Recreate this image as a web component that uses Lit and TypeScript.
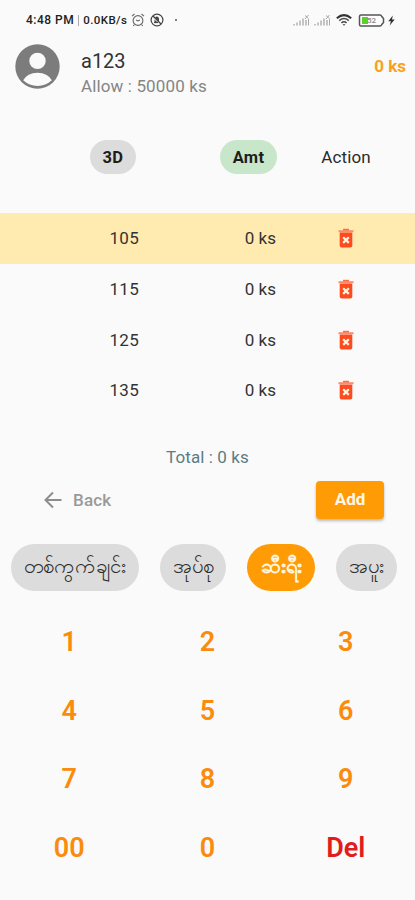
import { LitElement, html, css, svg } from "lit";
import { customElement, state } from "lit/decorators.js";
import { classMap } from "lit/directives/class-map.js";

const trash = svg`<svg class="trash" viewBox="0 0 16 20" width="16" height="20">
  <path d="M5 .8h6v2H5z" fill="#ff6a45"/>
  <path d="M.5 2.200h15v2H.5z" fill="#ff8a6c"/>
  <path d="M1.700 4.600h12.600v12.900a2 2 0 0 1-2 2H3.700a2 2 0 0 1-2-2z" fill="#fb4c20"/>
  <path d="M5.200 9.300l5.600 5.600M10.800 9.300l-5.600 5.600" stroke="#fff3e0" stroke-width="2.200" fill="none"/>
</svg>`;

const signal = svg`<svg viewBox="0 0 17 12" width="17" height="12">
  <path d="M1 11.500V10M4 11.500V8.500M7 11.500V6.500M10 11.500V4.500M13 11.500V6" stroke="#c4c4c4" stroke-width="2"/>
  <path d="M12 1.500l3.500 3M15.500 1l-3.500 4M15.500 5v6.500" stroke="#aaa" stroke-width="1"/>
</svg>`;

@customElement("status-bar")
class StatusBar extends LitElement {
  static styles = css`
    :host { display: flex; height: 39px; box-sizing: border-box; padding: 1px 20px 0 26px; align-items: center; justify-content: space-between; color: #222; font: 500 12px Roboto, sans-serif; }
    .side { display: flex; align-items: center; }
    .time { font-size: 12px; letter-spacing: .5px; }
    .bar { width: 1px; height: 11px; background: #aaa; margin: 0 4px 0 4px; }
    .speed { font-size: 11.500px; letter-spacing: .4px; }
    .alarm { margin-left: 4px; }
    .mute { margin-left: 5px; }
    .dot { width: 2px; height: 2px; border-radius: 1px; background: #555; margin-left: 11px; }
    .second { margin-left: 4px; display: flex; }
    .first { display: flex; }
    .wifi { margin-left: 5px; }
    .battery { margin-left: 6px; }
    .bolt { margin-left: 3px; }
    .level { font: 500 8px Roboto, sans-serif; }
  `;
  render() {
    return html`
      <div class="side">
        <span class="time">4:48 PM</span><span class="bar"></span><span class="speed">0.0KB/s</span>
        <svg class="alarm" viewBox="0 0 14 14" width="14" height="14" fill="none" stroke="#666" stroke-width="1.100">
          <circle cx="7" cy="7.500" r="4.900"/><path d="M1 3.200L3.500 1M13 3.200L10.500 1M3.500 11.500L2.300 13M10.500 11.500l1.200 1.500M5 7l2 1 2-1"/>
        </svg>
        <svg class="mute" viewBox="0 0 14 14" width="14" height="14" fill="none" stroke="#444" stroke-width="1.200">
          <circle cx="7" cy="7" r="5.900"/><path d="M3 3l8 8"/><path d="M5 4.500c2-2 4-.5 4 1.500v2.500L5.500 5zM4.500 6.500v3h3" fill="#444" stroke="none"/><path d="M4 9.500h4"/>
        </svg>
        <i class="dot"></i>
      </div>
      <div class="side">
        <span class="first">${signal}</span><span class="second">${signal}</span>
        <svg class="wifi" viewBox="0 0 16 12" width="16" height="12" fill="none">
          <path d="M.8 4.200Q8-2 15.200 4.200" stroke="#333" stroke-width="2"/>
          <path d="M3.200 6.600Q8 2.500 12.800 6.600" stroke="#555" stroke-width="1.500"/>
          <path d="M5.400 8.900Q8 6.700 10.600 8.900" stroke="#444" stroke-width="1.400"/><path d="M6.600 10.300L8 11.800l1.400-1.500z" fill="#333"/>
        </svg>
        <svg class="battery" viewBox="0 0 27 13" width="27" height="13">
          <path d="M3 1h19q1.200 0 1.800 1.500l1.700 2v4l-1.700 2Q23.200 12 22 12H3Q1.500 12 1.500 10.500v-8Q1.500 1 3 1z" fill="#fff" stroke="#555" stroke-width="1.500"/>
          <path d="M4 3h6v7H4z" fill="#5fd02b"/>
          <text class="level" x="9" y="9.400" fill="#888">52</text>
        </svg>
        <svg class="bolt" viewBox="0 0 7 11" width="7" height="11"><path d="M4.800.5L.3 6.200h2.600L1.700 10.500 6.700 4.500H4z" fill="#333"/></svg>
      </div>`;
  }
}

@customElement("app-root")
class AppRoot extends LitElement {
  @state() private selected = 0;
  @state() private mode = 2;

  private numbers = ["105", "115", "125", "135"];
  private modes = [
    { label: "တစ်ကွက်ချင်း", cls: "single" },
    { label: "အုပ်စု", cls: "group" },
    { label: "ဆီးရီး", cls: "series" },
    { label: "အပူး", cls: "double" },
  ];
  private keys = ["1", "2", "3", "4", "5", "6", "7", "8", "9", "00", "0", "Del"];

  static styles = css`
    :host { display: flex; flex-direction: column; height: 900px; overflow: hidden; background: #fafafa; font-family: Roboto, "Noto Sans", sans-serif; color: #333; }
    button { border: 0; padding: 0; background: none; font: inherit; color: inherit; }
    .profile { display: flex; height: 83px; box-sizing: border-box; padding: 5px 9px 0 15px; }
    .avatar { flex: none; }
    .who { margin-left: 21px; flex: 1; padding-top: 4px; }
    .name { font-size: 20px; line-height: 26px; letter-spacing: 0; }
    .allow { font-size: 17px; line-height: 24px; color: #858585; letter-spacing: .13px; }
    .balance { color: #f9a11f; font-size: 17px; font-weight: 700; line-height: 20px; padding-top: 12px; }
    .grid { display: grid; grid-template-columns: 167px 110px 138px; align-items: center; }
    .head { height: 70px; margin-bottom: 21px; font-size: 16.500px; }
    .cell { justify-self: end; letter-spacing: .3px; }
    .center { justify-self: center; display: flex; }
    .pill { height: 34px; border-radius: 17px; display: grid; place-items: center; font-weight: 700; color: #1d1d1d; }
    .three { width: 46px; background: #dcdcdc; margin-right: 31px; }
    .amt { width: 57px; background: #c8e6c9; }
    .action { font-size: 17px; letter-spacing: .1px; color: #2b2b2b; }
    .row { height: 50.700px; font-size: 17px; }
    .row .num { padding-right: 28px; letter-spacing: .3px; }
    .row .sum { padding-right: 1px; letter-spacing: 0; }
    .active { background: #ffeab0; }
    .total { margin-top: 29px; height: 24px; line-height: 24px; text-align: center; font-size: 17px; letter-spacing: .1px; color: #5d7c82; }
    .actions { display: flex; justify-content: space-between; align-items: center; height: 39px; margin-top: 12px; padding: 0 31px 0 44px; }
    .back { display: flex; align-items: center; gap: 11px; color: #999; font-size: 17px; font-weight: 500; letter-spacing: .2px; padding-bottom: 1px; }
    .add { width: 68px; height: 38px; border-radius: 4px; background: #ff9c05; color: #fff8e8; font-size: 17px; line-height: 34px; padding-bottom: 2px; font-weight: 700; box-shadow: 0 2px 3px #0004; }
    .modes { display: flex; height: 47px; margin-top: 24px; padding-left: 11px; gap: 21px; }
    .mode { flex: none; border-radius: 24px; background: #dcdcdc; font-size: 20.500px; line-height: 30px; padding-bottom: 3px; color: #2d2d2d; white-space: nowrap; }
    .single { width: 128px; }
    .group { width: 66px; }
    .series { width: 68px; }
    .double { width: 61px; }
    .chosen { background: #ff9c05; color: #fff6e0; font-weight: 600; }
    .keypad { display: grid; grid-template-columns: repeat(3, 1fr); grid-auto-rows: 68.700px; margin-top: 17px; }
    .key { font-size: 27px; font-weight: 600; color: #fa8b0c; }
    .del { color: #e31b1b; }
  `;

  render() {
    return html`
      <status-bar></status-bar>
      <header class="profile">
        <svg class="avatar" viewBox="0 0 44 44" width="45" height="45">
          <circle cx="22" cy="22" r="21.700" fill="#7c7c7c"/><circle cx="22" cy="16.500" r="8" fill="#fafafa"/>
          <path d="M8 35.500Q12 28 22 28t14 7.500Q30 41 22 41T8 35.500z" fill="#fafafa"/>
        </svg>
        <div class="who"><div class="name">a123</div><div class="allow">Allow : 50000 ks</div></div>
        <div class="balance">0 ks</div>
      </header>
      <div class="grid head">
        <div class="cell"><span class="pill three">3D</span></div>
        <div class="cell"><span class="pill amt">Amt</span></div>
        <div class="center action">Action</div>
      </div>
      ${this.numbers.map((n, i) => html`
        <div class=${classMap({ grid: true, row: true, active: i === this.selected })} @click=${() => (this.selected = i)}>
          <div class="cell num">${n}</div><div class="cell sum">0 ks</div><div class="center">${trash}</div>
        </div>`)}
      <div class="total">Total : 0 ks</div>
      <div class="actions">
        <button class="back">
          <svg viewBox="0 0 18 18" width="18" height="18" fill="none" stroke="#8d8d8d" stroke-width="2"><path d="M17.500 9H2M9 1.500L1.500 9 9 16.500"/></svg>
          Back
        </button>
        <button class="add">Add</button>
      </div>
      <div class="modes">
        ${this.modes.map((m, i) => html`
          <button class=${classMap({ mode: true, [m.cls]: true, chosen: i === this.mode })} @click=${() => (this.mode = i)}>${m.label}</button>`)}
      </div>
      <div class="keypad">
        ${this.keys.map((k) => html`<button class=${classMap({ key: true, del: k === "Del" })}>${k}</button>`)}
      </div>`;
  }
}
